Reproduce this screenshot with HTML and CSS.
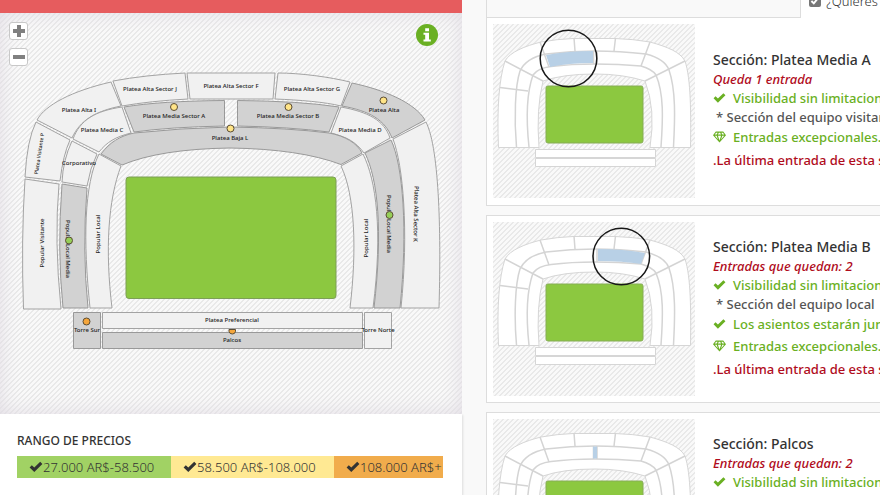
FILE: index.html
```html
<!DOCTYPE html>
<html lang="es">
<head>
<meta charset="utf-8">
<meta name="viewport" content="width=device-width, initial-scale=1">
<title>Entradas por sección</title>
<link rel="stylesheet" href="styles.css">
</head>
<body>
<svg class="defs" aria-hidden="true">
  <symbol id="check" viewBox="0 0 14 12"><path d="M0.6 6.4 2.8 4.2 5.3 6.6 11.2 0.8 13.4 3 5.3 11Z"/></symbol>
  <symbol id="gem" viewBox="0 0 14 12"><path fill-rule="evenodd" d="M3 0H11L14 4 7 12 0 4ZM3.4 1.3 1.8 3.4H4L5 1.3ZM6.3 1.3 5.3 3.4H8.7L7.7 1.3ZM9 1.3 10 3.4H12.2L10.6 1.3ZM2 4.7 5.3 8.6 4 4.7ZM5.3 4.7 7 9.8 8.7 4.7ZM10 4.7 8.7 8.6 12 4.7Z"/></symbol>
  <symbol id="stadium" viewBox="0 0 202 174">
    <g fill="#fff" stroke="#d6d6d6">
      <path d="M5.500 123.500Q3 65 12 37C17 28 32 22 48 18Q65 15 80 14.500H122Q140 15 157 18C175 23 187 28 192 37C198 55 198 90 197.500 123.500H157Q163 85 152 57Q130 50 102 50Q70 50 50 57Q43 85 46 123.500Z"/>
      <path d="M42.500 125.500H162.500V133.500H42.500ZM42.500 134.500H162.500V142.500H42.500Z"/>
    </g>
    <g fill="none" stroke="#d4d4d4" stroke-width="1.500">
      <path d="M23.500 123C21 95 22 62 27 47Q33 34 53 30Q78 27 102 27T153 30Q172 35 176 46C183 66 182 95 180.500 123"/>
      <path d="M36 123C33 95 34 68 40 51Q45 44 58 42.500Q78 40 102 40T148 42Q159 45 163 51C171 70 170 95 168 123"/>
      <path d="M47 18 56 43M81 14 82 27M122.500 14 121 27M157 18 148 42M12 37 50 57M192 37 152 57M7 63.500 35 67M100.500 27V40M104 27V40"/>
    </g>
    <rect x="53" y="62" width="97" height="57" rx="2" fill="#8cc840" stroke="#86ad55"/>
  </symbol>
</svg>

<div class="page">
  <main class="venue">
    <div class="banner"></div>
    <div class="map">
      <svg class="plan" viewBox="0 13 462 401" role="img" aria-label="Plano del estadio">
        <g class="stand">
          <path d="M37 120C45 105 72 91 111 82L121 106C96 111 80 120 72 138Z"/>
          <path d="M113 81Q145 75 185 73L188 99Q150 101 122 106Z"/>
          <path d="M187 73H275L273 99H190Z"/>
          <path d="M278 73C300 73 330 77 350 82L341 106C325 102 300 100 275 99Z"/>
          <path d="M122 107 131 133C115 137 107 142 99 152L73 139C80 120 95 111 122 107Z"/>
          <path d="M341 107C368 112 384 120 390 138L364 153C356 142 347 137 331 133Z"/>
          <path d="M36 122 70 140Q63 155 60 181L25 177Q27 140 36 122Z"/>
          <path d="M72 141 97 154Q90 168 87 186L62 182Q63 160 72 141Z"/>
          <path d="M25 179 59 184Q54 240 61 309H23.500Q21 240 25 179Z"/>
          <path d="M99 154 121 166C108 200 105 250 112 308H90C83 240 84 185 99 154Z"/>
          <path d="M341 166 363 154C376 180 383 230 373 308H350C357 250 355 195 341 166Z"/>
          <path d="M393 139 426 122C440 150 441 240 439 308H401C409 230 403 165 393 139Z"/>
          <path d="M102.500 312.500H362.500V328.500H102.500ZM364.500 312.500H391.500V348.500H364.500Z"/>
        </g>
        <g class="stand stand-open">
          <path d="M352 83C385 90 415 103 425 120L392 138C385 120 370 111 342 106Z"/>
          <path d="M124 107Q160 101 224.500 100.500V126Q170 127 134 132Z"/>
          <path d="M237.500 100.500Q300 101 339 107L329 132Q290 127 237.500 126Z"/>
          <path d="M101 154C110 142 120 136 134 133Q180 128 230 127Q290 128 329 133C345 136 357 143 362 153L341 164.500Q300 149 230 148Q160 149 122 165Z"/>
          <path d="M62 184 87 188Q82 250 88 308H63Q57 250 62 184Z"/>
          <path d="M365 153 391 140C403 165 408 230 400 308H374C383 230 378 180 365 153Z"/>
          <path d="M73.500 312.500H100.500V348.500H73.500ZM102.500 332.500H362.500V348.500H102.500Z"/>
        </g>
        <rect class="pitch" x="126" y="177" width="210" height="121.500" rx="3"/>
        <g class="names">
          <text x="79" y="112">Platea Alta I</text>
          <text x="150" y="91">Platea Alta Sector J</text>
          <text x="231" y="88">Platea Alta Sector F</text>
          <text x="312" y="91">Platea Alta Sector G</text>
          <text x="384" y="112">Platea Alta</text>
          <text x="174" y="118">Platea Media Sector A</text>
          <text x="288" y="118">Platea Media Sector B</text>
          <text x="102" y="132">Platea Media C</text>
          <text x="360" y="132">Platea Media D</text>
          <text x="230" y="140">Platea Baja L</text>
          <text x="79" y="165">Corporativo</text>
          <text class="small" transform="translate(41 154) rotate(-81)">Platea Visitante P</text>
          <text transform="translate(44 243) rotate(-90)">Popular Visitante</text>
          <text transform="translate(66 249) rotate(90)">Popular Local Media</text>
          <text transform="translate(100 234) rotate(-90)">Popular Local</text>
          <text transform="translate(368 238) rotate(-90)">Popular Local</text>
          <text transform="translate(387 224) rotate(90)">Popular Local Media</text>
          <text transform="translate(414 214) rotate(91)">Platea Alta Sector K</text>
          <text x="87" y="332">Torre Sur</text>
          <text x="232" y="322">Platea Preferencial</text>
          <text x="232" y="342">Palcos</text>
          <text x="378" y="332">Torre Norte</text>
        </g>
        <g class="pins">
          <g fill="#ffe487"><circle cx="174" cy="107" r="3.500"/><circle cx="288.500" cy="107" r="3.500"/><circle cx="383.500" cy="100.500" r="3.500"/><circle cx="230.500" cy="128.500" r="3.500"/></g>
          <g fill="#96cf58"><circle cx="69" cy="240.500" r="3.500"/><circle cx="389.500" cy="215" r="3.500"/></g>
          <g fill="#f5a63b"><circle cx="86.500" cy="321.500" r="3.500"/><path d="M229 329.500H235.500V331.500Q235 334 232.300 334T229 331.500Z"/></g>
        </g>
      </svg>
      <div class="zoom">
        <button type="button" aria-label="Acercar"><svg viewBox="0 0 12 12"><path d="M6 0V12M0 6H12"/></svg></button>
        <button type="button" aria-label="Alejar"><svg viewBox="0 0 12 12"><path d="M0 6H12"/></svg></button>
      </div>
      <button class="info" type="button" aria-label="Información"><svg viewBox="0 0 22 22"><circle cx="11" cy="11" r="11" fill="#6ab023"/><path fill="#fff" d="M9.200 4.200H13V7.200H9.200ZM7.500 8.700H13V15.500H14.800V17.600H7.500V15.500H9.200V10.800H7.500Z"/></svg></button>
    </div>
    <section class="legend">
      <h2>RANGO DE PRECIOS</h2>
      <div class="ranges">
        <span class="range low"><svg class="tick"><use href="#check"/></svg>27.000 AR$-58.500</span>
        <span class="range mid"><svg class="tick"><use href="#check"/></svg>58.500 AR$-108.000</span>
        <span class="range high"><svg class="tick"><use href="#check"/></svg>108.000 AR$+</span>
      </div>
    </section>
  </main>

  <aside class="offers">
    <div class="toolbar">
      <div class="filters"></div>
      <label class="ask"><input type="checkbox" checked>¿Quieres</label>
    </div>
    <article class="card first">
      <svg class="thumb" viewBox="0 0 202 174"><use href="#stadium"/><path class="spot" d="M53 31Q75 27 100 27V39Q75 39 57 43Z"/><circle class="lens" cx="75.500" cy="34.500" r="28.300"/></svg>
      <div class="details">
        <h3>Sección: Platea Media A</h3>
        <p class="left">Queda 1 entrada</p>
        <ul>
          <li class="good"><svg><use href="#check"/></svg>Visibilidad sin limitaciones</li>
          <li class="note">* Sección del equipo visitante</li>
          <li class="good tall"><svg><use href="#gem"/></svg>Entradas excepcionales.</li>
        </ul>
        <p class="last">.La última entrada de esta sección</p>
      </div>
    </article>
    <article class="card">
      <svg class="thumb" viewBox="0 0 202 174"><use href="#stadium"/><path class="spot" d="M105 27Q130 27 152 31L148 42Q130 39 105 39Z"/><circle class="lens" cx="128.300" cy="34.500" r="28.300"/></svg>
      <div class="details">
        <h3>Sección: Platea Media B</h3>
        <p class="left">Entradas que quedan: 2</p>
        <ul>
          <li class="good"><svg><use href="#check"/></svg>Visibilidad sin limitaciones</li>
          <li class="note">* Sección del equipo local</li>
          <li class="good tall"><svg><use href="#check"/></svg>Los asientos estarán juntos</li>
          <li class="good tall"><svg><use href="#gem"/></svg>Entradas excepcionales.</li>
        </ul>
        <p class="last">.La última entrada de esta sección</p>
      </div>
    </article>
    <article class="card">
      <svg class="thumb" viewBox="0 0 202 174"><use href="#stadium"/><path class="spot" d="M100 27.500H104V39.500H100Z"/></svg>
      <div class="details">
        <h3>Sección: Palcos</h3>
        <p class="left">Entradas que quedan: 2</p>
        <ul>
          <li class="good"><svg><use href="#check"/></svg>Visibilidad sin limitaciones</li>
          <li class="note">* Sección del equipo local</li>
          <li class="good tall"><svg><use href="#check"/></svg>Los asientos estarán juntos</li>
          <li class="good tall"><svg><use href="#gem"/></svg>Entradas excepcionales.</li>
        </ul>
        <p class="last">.La última entrada de esta sección</p>
      </div>
    </article>
  </aside>
</div>
</body>
</html>
```
FILE: styles.css
```css
* { box-sizing: border-box; }

body {
  margin: 0;
  height: 100vh;
  overflow: hidden;
  background: #f9f9f9;
  color: #333;
  font-family: "Noto Sans", "Open Sans", sans-serif;
  font-size: 13px;
}

h2, h3, p, ul { margin: 0; padding: 0; }
ul { list-style: none; }
button { padding: 0; border: 0; background: none; }

.defs { position: absolute; width: 0; height: 0; }

.page {
  display: grid;
  grid-template-columns: 52.5% 1fr;
  column-gap: 24px;
  height: 100%;
}

.venue {
  display: flex;
  flex-direction: column;
  min-width: 0;
}

.banner { height: 13px; background: #e65c5e; }

.map, .thumb {
  background-color: #f9f9f9;
  background-image: linear-gradient(135deg, #e9e9e9 12.5%, transparent 12.5% 50%, #e9e9e9 50% 62.5%, transparent 62.5%);
  background-size: 5px 5px;
}

.map {
  position: relative;
  box-shadow: inset 0 0 20px #e0dbe3;
}

.plan { display: block; width: 100%; height: auto; }
.stand { fill: #f1f1f1; stroke: #a3a3a3; }
.stand-open { fill: #d2d2d2; stroke: #999; }
.pitch { fill: #8cc840; stroke: #7d9f55; }

.names {
  fill: #222;
  font-size: 6px;
  font-weight: 500;
  text-anchor: middle;
}
.names .small { font-size: 5px; }
.pins { stroke: #5b4d35; }

.zoom {
  position: absolute;
  top: 9px;
  left: 9px;
  display: flex;
  flex-direction: column;
  gap: 8px;
}
.zoom button {
  display: grid;
  place-items: center;
  width: 19px;
  height: 18px;
  border: 1px solid #c8c8c8;
  border-radius: 3px;
  background: #fff;
}
.zoom svg { width: 12px; height: 12px; stroke: #808080; stroke-width: 4; }

.info { position: absolute; top: 11px; right: 24px; width: 22px; height: 22px; }
.info svg { display: block; }

.legend {
  flex: 1;
  padding: 18px 19px 0 17px;
  background: #fff;
  box-shadow: 1px 1px 2px #ddd;
}
.legend h2 {
  font-size: 12px;
  font-weight: 500;
  line-height: 18px;
  margin-bottom: 6px;
}
.ranges {
  display: grid;
  grid-template-columns: 154fr 163fr 109fr;
}
.range {
  display: flex;
  align-items: center;
  min-width: 0;
  height: 22px;
  padding-left: 12px;
  font-size: 13px;
  font-weight: 300;
  white-space: nowrap;
}
.low { background: #a1d264; }
.mid { background: #ffe993; }
.high { background: #f1ac4c; }
.tick { flex: none; width: 14px; height: 12px; fill: #333; }

.offers { min-width: 0; overflow: hidden; }
.toolbar { display: flex; height: 32px; margin-top: -14px; }
.filters {
  flex: 0 0 80%;
  border: solid #ddd;
  border-width: 0 1px 1px;
}
.ask {
  display: flex;
  align-items: center;
  flex: 1;
  min-width: 0;
  padding: 0 0 2px 8px;
  background: #fff;
  font-size: 13px;
  font-weight: 300;
  white-space: nowrap;
}
.ask input { width: 12px; height: 12px; margin: 0 5px 0 0; accent-color: #777; }

.card {
  display: flex;
  align-items: center;
  margin-bottom: 9px;
  padding: 6px 0 6px 6px;
  border: 1px solid #ddd;
  border-right: 0;
  background: #fff;
}
.card.first { border-top: 0; padding-bottom: 7px; }
.thumb { flex: none; width: 202px; height: 174px; }
.spot { fill: #b8d0e6; }
.lens { fill: none; stroke: #181818; stroke-width: 1.500; }

.details { margin-left: 18px; font-weight: 500; white-space: nowrap; }
.details h3 { font-size: 14px; font-weight: 500; line-height: 20px; }
.left { color: #b00c1c; font-style: italic; line-height: 18px; }
.good { display: flex; align-items: center; color: #6ab023; line-height: 20px; }
.good svg { width: 13px; height: 12px; margin-right: 7px; fill: #6ab023; }
.tall { line-height: 22px; }
.note { padding-left: 3px; color: #555; line-height: 18px; }
.last { color: #b00c1c; line-height: 24px; }
```
